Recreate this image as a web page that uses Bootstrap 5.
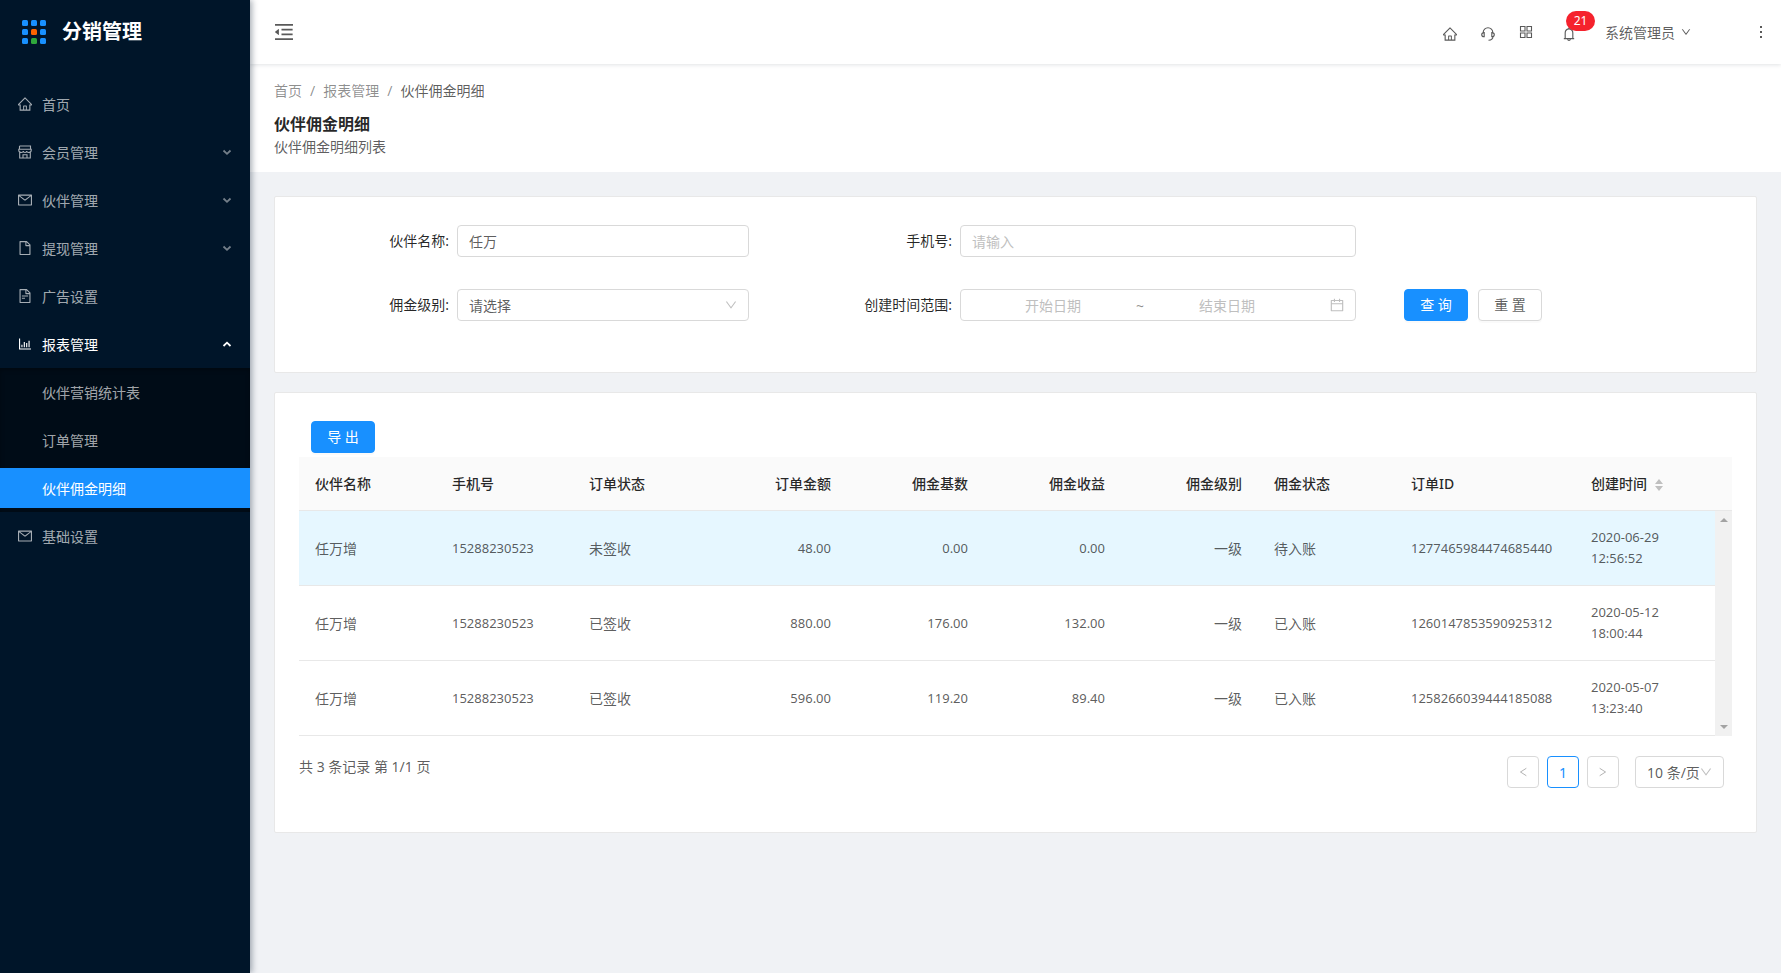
<!DOCTYPE html>
<html lang="zh-CN">
<head>
<meta charset="utf-8">
<meta name="viewport" content="width=device-width, initial-scale=1">
<title>伙伴佣金明细 - 分销管理</title>
<link rel="stylesheet" href="https://cdn.jsdelivr.net/npm/bootstrap@5.3.0/dist/css/bootstrap.min.css">
<style>
  :root { --brand: #1890ff; --line: #e8e8e8; --field: #d9d9d9; --ink: rgba(0,0,0,.85); --text: rgba(0,0,0,.65); --soft: rgba(0,0,0,.45); --hint: #bfbfbf; }
  body { font-family: "Noto Sans", "Noto Sans CJK SC", sans-serif; font-size: 14px; line-height: 21px; color: var(--text); background: #f0f2f5; }
  a { color: inherit; text-decoration: none; }
  button, input, select { font: inherit; color: inherit; }
  .ico { width: 14px; height: 14px; fill: currentColor; flex: none; display: block; }
  .ico-18 { width: 18px; height: 18px; }
  .ico-12 { width: 12px; height: 12px; }
  .ico-10 { width: 10px; height: 10px; }

  /* sidebar */
  .sider { width: 250px; flex: none; background: #001529; color: rgba(255,255,255,.65); box-shadow: 2px 0 6px rgba(0,21,41,.35); z-index: 3; }
  .brand-bar { height: 64px; padding-left: 22px; gap: 16px; }
  .brand-bar h1 { font-size: 20px; line-height: 28px; font-weight: 700; color: #fff; }
  .menu a, .menu button { display: flex; align-items: center; width: 100%; height: 40px; margin: 4px 0; padding: 0 18px; gap: 10px; background: none; border: 0; color: inherit; text-align: left; }
  .menu li { display: flow-root; }
  .menu .on { color: #fff; }
  .menu .ico-10 { opacity: .7; }
  .menu .on .ico-10 { opacity: 1; }
  .submenu { background: #000c17; box-shadow: inset 0 2px 4px rgba(0,0,0,.3); }
  .submenu a { padding-left: 42px; }
  .submenu a.active { background: var(--brand); color: #fff; }

  /* top bar */
  .topbar { height: 64px; background: #fff; box-shadow: 0 1px 4px rgba(0,21,41,.12); z-index: 2; padding-left: 25px; }
  .topbar button, .topbar .tool { background: none; border: 0; padding: 0; }
  .topbar .tool { width: 38px; height: 64px; display: flex; align-items: center; justify-content: center; }
  .topbar .tool-low { padding-top: 3px; }
  .tool-bell { margin-left: 5px; }
  .count { position: absolute; top: 11px; left: 16px; width: 29px; height: 20px; border-radius: 10px; background: #f5222d; color: #fff; font-size: 12px; line-height: 20px; text-align: center; }
  .user { margin-left: 17px; gap: 6px; }
  .topbar .more { width: 40px; margin-left: 50px; }

  .page-head { background: #fff; padding: 16px 24px 15px; }
  .crumbs { color: var(--soft); gap: 8px; }
  .crumbs .here { color: var(--text); }
  .page-head h2 { font-size: 16px; line-height: 24px; font-weight: 700; color: var(--ink); margin: 11px 0 0; }

  .panel { background: #fff; border: 1px solid var(--line); border-radius: 2px; }

  /* search form */
  .search { display: grid; grid-template-columns: 182fr 292fr 211fr 396fr 400fr; row-gap: 32px; padding: 28px 0 51px; margin-bottom: 19px; }
  .search label { color: var(--ink); text-align: right; line-height: 32px; padding-right: 8px; }
  .field { height: 32px; width: 100%; border: 1px solid var(--field); border-radius: 4px; background: #fff; padding: 0 11px; outline: 0; min-width: 0; }
  ::placeholder { color: var(--hint) !important; opacity: 1; }
  .pick { position: relative; }
  .pick select { appearance: none; }
  .pick svg { position: absolute; right: 12px; top: 10px; color: var(--hint); pointer-events: none; }
  .range input { border: 0; padding: 0; outline: 0; min-width: 0; flex: 1 1 0; text-align: center; background: none; }
  .range span { width: 12px; text-align: center; color: var(--soft); }
  .range svg { margin-left: 22px; color: var(--hint); }
  .actions { padding-left: 48px; gap: 10px; }
  .act { width: 64px; height: 32px; padding: 0; border: 1px solid var(--field); border-radius: 4px; line-height: 30px; color: var(--text); background: #fff; box-shadow: 0 2px 0 rgba(0,0,0,.02); }
  .act-main { background: var(--brand); border-color: var(--brand); color: #fff; }

  /* table */
  .list { padding: 28px 24px 44px; margin-bottom: 24px; }
  .tools { padding: 0 12px 4px; }
  .data { table-layout: fixed; width: 100%; border-collapse: separate; border-spacing: 0; }
  .data th, .data td { padding: 16px; border-bottom: 1px solid var(--line); vertical-align: middle; }
  .data th { background: #fafafa; color: var(--ink); font-weight: 500; }
  .data .hover td { background: #e6f7ff; }
  .num { font-size: 13px; }
  .col-std { width: 137px; }
  .col-id { width: 180px; }
  .rail { width: 17px; flex: none; }
  .rail-head { height: 54px; background: #fafafa; border-bottom: 1px solid var(--line); }
  .rail-track { background: #f1f1f1; color: #a3a3a3; padding: 7px 0; }
  .rail svg { width: 8px; height: 4px; fill: currentColor; }
  .sorter { width: 8px; height: 12px; fill: var(--hint); }

  .pager { padding: 20px 8px 0 0; }
  .page-btn { width: 32px; height: 32px; border: 1px solid var(--field); border-radius: 4px; background: #fff; padding: 0; display: flex; align-items: center; justify-content: center; }
  .page-btn:disabled { color: rgba(0,0,0,.3); }
  .page-btn.now { border-color: var(--brand); color: var(--brand); }
  .size { width: 89px; margin-left: 8px; }
  .size .field { padding-right: 0; }
</style>
</head>
<body>
<svg class="d-none" xmlns="http://www.w3.org/2000/svg">
  <symbol id="home" viewBox="64 64 896 896"><path d="M946.5 505L534.2 92.9a31.500 31.500 0 0 0-44.400 0L77.500 505a63.900 63.900 0 0 0-18.800 46c.4 35.200 29.700 63.300 64.900 63.300h42.500V940h691.800V614.300h43.400c17.100 0 33.200-6.700 45.300-18.800a63.600 63.600 0 0 0 18.700-45.300c0-17-6.700-33.100-18.800-45.200zM568 868H456V664h112v204zm217.900-325.700V868H632V640c0-22.100-17.900-40-40-40H432c-22.100 0-40 17.900-40 40v228H238.100V542.300h-96l370-369.700 23.100 23.100L882 542.300h-96.100z"/></symbol>
  <symbol id="shop" viewBox="0 0 14 14"><path fill="none" stroke="currentColor" stroke-width="1.1" d="M1.500 1h11v3.500M1.500 4.500V1M.8 4.200h12.400v1.300c0 1.400-1.600 2-2.700 2-1 0-1.800-.6-1.800-1.400 0 .8-.8 1.400-1.700 1.400s-1.700-.6-1.700-1.400c0 .8-.8 1.400-1.800 1.400-1.100 0-2.700-.6-2.700-2zM1.700 7.500V13h10.600V7.500M5 13V9.800h4V13"/></symbol>
  <symbol id="mail" viewBox="64 64 896 896"><path d="M928 160H96c-17.700 0-32 14.300-32 32v640c0 17.700 14.300 32 32 32h832c17.700 0 32-14.300 32-32V192c0-17.700-14.300-32-32-32zm-40 110.800V792H136V270.800l-27.600-21.500 39.300-50.500 42.800 33.300h643.100l42.800-33.300 39.300 50.500-27.700 21.500zM833.600 232L512 482 190.400 232l-42.800-33.300-39.300 50.500 27.600 21.500 341.600 265.600a56 56 0 0 0 68.700 0L888 270.800l27.600-21.500-39.300-50.500-42.700 33.200z"/></symbol>
  <symbol id="file" viewBox="64 64 896 896"><path d="M854.600 288.600L639.400 73.400c-6-6-14.100-9.400-22.600-9.400H192c-17.700 0-32 14.300-32 32v832c0 17.700 14.300 32 32 32h640c17.700 0 32-14.300 32-32V311.300c0-8.500-3.400-16.700-9.400-22.700zM790.200 326H602V137.800L790.200 326zm1.800 562H232V136h302v216a42 42 0 0 0 42 42h216v494z"/></symbol>
  <symbol id="file-text" viewBox="64 64 896 896"><path d="M854.600 288.600L639.400 73.400c-6-6-14.100-9.400-22.600-9.400H192c-17.700 0-32 14.300-32 32v832c0 17.700 14.300 32 32 32h640c17.700 0 32-14.300 32-32V311.300c0-8.500-3.400-16.700-9.400-22.700zM790.200 326H602V137.800L790.200 326zm1.800 562H232V136h302v216a42 42 0 0 0 42 42h216v494zM504 618H320c-4.400 0-8 3.600-8 8v48c0 4.400 3.600 8 8 8h184c4.400 0 8-3.600 8-8v-48c0-4.400-3.600-8-8-8zM312 490v48c0 4.400 3.600 8 8 8h384c4.400 0 8-3.600 8-8v-48c0-4.400-3.600-8-8-8H320c-4.400 0-8 3.600-8 8z"/></symbol>
  <symbol id="chart" viewBox="64 64 896 896"><path d="M888 792H200V168c0-4.400-3.600-8-8-8h-56c-4.400 0-8 3.600-8 8v688c0 4.400 3.600 8 8 8h752c4.400 0 8-3.600 8-8v-56c0-4.400-3.600-8-8-8zM280 552h72v160h-72zM432 376h72v336h-72zM584 454h72v258h-72zM736 296h72v416h-72z"/></symbol>
  <symbol id="down" viewBox="64 64 896 896"><path d="M884 256h-75c-5.100 0-9.900 2.500-12.900 6.600L512 654.200 227.900 262.600c-3-4.100-7.800-6.600-12.900-6.600h-75c-6.500 0-10.300 7.400-6.500 12.700l352.600 486.100c12.800 17.600 39 17.600 51.700 0l352.600-486.100c3.900-5.300.1-12.700-6.400-12.700z"/></symbol>
  <symbol id="caret-down" viewBox="0 0 10 10"><path fill="none" stroke="currentColor" stroke-width="1.800" d="M1.500 3.500 5 6.800 8.500 3.500"/></symbol>
  <symbol id="caret-up" viewBox="0 0 10 10"><path fill="none" stroke="currentColor" stroke-width="1.800" d="M1.500 7 5 3.700 8.500 7"/></symbol>
  <symbol id="fold" viewBox="112 112 800 800"><path d="M408 442h480c4.400 0 8-3.600 8-8v-56c0-4.400-3.600-8-8-8H408c-4.400 0-8 3.600-8 8v56c0 4.400 3.600 8 8 8zm-8 204c0 4.400 3.600 8 8 8h480c4.400 0 8-3.600 8-8v-56c0-4.400-3.600-8-8-8H408c-4.400 0-8 3.600-8 8v56zm504-486H120c-4.400 0-8 3.600-8 8v56c0 4.400 3.600 8 8 8h784c4.400 0 8-3.600 8-8v-56c0-4.400-3.600-8-8-8zm0 632H120c-4.400 0-8 3.600-8 8v56c0 4.400 3.600 8 8 8h784c4.400 0 8-3.600 8-8v-56c0-4.400-3.600-8-8-8zM115.400 518.900L271.700 642c5.800 4.600 14.400.5 14.400-6.900V388.900c0-7.400-8.500-11.500-14.400-6.900L115.400 505.100a8.740 8.740 0 0 0 0 13.800z"/></symbol>
  <symbol id="headset" viewBox="0 0 14 14"><path fill="none" stroke="currentColor" stroke-width="1.100" d="M2.200 6V5.600a4.800 4.800 0 0 1 9.600 0V6M3.200 5.600v4.100c-1.600 0-2.500-.9-2.500-2s.9-2.100 2.500-2.100zM10.800 5.600v4.100c1.600 0 2.500-.9 2.500-2s-.9-2.100-2.500-2.100zM12 9.500c0 2.300-1.500 3.600-4.500 3.700"/></symbol>
  <symbol id="grid" viewBox="0 0 14 14"><path fill="none" stroke="currentColor" stroke-width="1.100" d="M1.500 1.500H6V6H1.500zM8 1.500h4.500V6H8zM1.500 8H6v4.500H1.500zM8 8h4.500v4.500H8z"/></symbol>
  <symbol id="bell" viewBox="64 64 896 896"><path d="M816 768h-24V428c0-141.100-104.300-257.800-240-277.200V112c0-22.100-17.900-40-40-40s-40 17.900-40 40v38.800C336.300 170.200 232 286.900 232 428v340h-24c-17.700 0-32 14.300-32 32v32c0 4.400 3.600 8 8 8h216c0 61.800 50.200 112 112 112s112-50.200 112-112h216c4.400 0 8-3.600 8-8v-32c0-17.700-14.300-32-32-32zM512 888c-26.500 0-48-21.500-48-48h96c0 26.500-21.500 48-48 48zM304 768V428c0-55.600 21.600-107.800 60.900-147.100S456.400 220 512 220c55.600 0 107.800 21.600 147.100 60.900S720 372.400 720 428v340H304z"/></symbol>
  <symbol id="more" viewBox="0 0 14 14"><path d="M6 1h2v2H6zM6 6h2v2H6zM6 11h2v2H6z"/></symbol>
  <symbol id="calendar" viewBox="64 64 896 896"><path d="M880 184H712v-64c0-4.400-3.600-8-8-8h-56c-4.400 0-8 3.600-8 8v64H384v-64c0-4.400-3.600-8-8-8h-56c-4.400 0-8 3.600-8 8v64H144c-17.700 0-32 14.300-32 32v664c0 17.700 14.300 32 32 32h736c17.700 0 32-14.300 32-32V216c0-17.700-14.300-32-32-32zm-40 656H184V460h656v380zM184 392V256h128v48c0 4.400 3.600 8 8 8h56c4.400 0 8-3.600 8-8v-48h256v48c0 4.400 3.600 8 8 8h56c4.400 0 8-3.600 8-8v-48h128v136H184z"/></symbol>
  <symbol id="left" viewBox="0 0 12 12"><path fill="none" stroke="currentColor" stroke-width="1.200" d="M10 1.500 3 6 10 10.500"/></symbol>
  <symbol id="right" viewBox="0 0 12 12"><path fill="none" stroke="currentColor" stroke-width="1.200" d="M2 1.500 9 6 2 10.500"/></symbol>
</svg>

<div class="d-flex min-vh-100">
  <aside class="sider position-relative">
    <a class="brand-bar d-flex align-items-center" href="#">
      <svg width="24" height="24" viewBox="0 0 24 24" fill="#1890ff" aria-hidden="true">
        <rect width="6" height="6" rx="1.500"/><rect x="9" width="6" height="6" rx="1.500"/><rect x="18" width="6" height="6" rx="1.500"/>
        <rect y="9" width="6" height="6" rx="1.500"/><rect x="9" y="9" width="6" height="6" rx="1.500" fill="#fa6400"/><rect x="18" y="9" width="6" height="6" rx="1.500"/>
        <rect y="18" width="6" height="6" rx="1.500"/><rect x="9" y="18" width="6" height="6" rx="1.500" fill="#2fa83c"/><rect x="18" y="18" width="6" height="6" rx="1.500"/>
      </svg>
      <h1 class="mb-0">分销管理</h1>
    </a>
    <ul class="menu list-unstyled pt-3 mb-0">
      <li><a href="#"><svg class="ico"><use href="#home"/></svg>首页</a></li>
      <li><button type="button"><svg class="ico"><use href="#shop"/></svg>会员管理<svg class="ico ico-10 ms-auto"><use href="#caret-down"/></svg></button></li>
      <li><button type="button"><svg class="ico"><use href="#mail"/></svg>伙伴管理<svg class="ico ico-10 ms-auto"><use href="#caret-down"/></svg></button></li>
      <li><button type="button"><svg class="ico"><use href="#file"/></svg>提现管理<svg class="ico ico-10 ms-auto"><use href="#caret-down"/></svg></button></li>
      <li><a href="#"><svg class="ico"><use href="#file-text"/></svg>广告设置</a></li>
      <li>
        <button class="on" type="button" aria-expanded="true"><svg class="ico"><use href="#chart"/></svg>报表管理<svg class="ico ico-10 ms-auto"><use href="#caret-up"/></svg></button>
        <ul class="submenu list-unstyled">
          <li><a href="#">伙伴营销统计表</a></li>
          <li><a href="#">订单管理</a></li>
          <li><a class="active" href="#" aria-current="page">伙伴佣金明细</a></li>
        </ul>
      </li>
      <li><a href="#"><svg class="ico"><use href="#mail"/></svg>基础设置</a></li>
    </ul>
  </aside>

  <div class="flex-grow-1 d-flex flex-column">
    <header class="topbar position-relative d-flex align-items-center">
      <button type="button" aria-label="收起菜单"><svg class="ico ico-18"><use href="#fold"/></svg></button>
      <a class="tool tool-low ms-auto" href="#" aria-label="首页"><svg class="ico"><use href="#home"/></svg></a>
      <a class="tool tool-low" href="#" aria-label="客服"><svg class="ico"><use href="#headset"/></svg></a>
      <a class="tool" href="#" aria-label="应用"><svg class="ico"><use href="#grid"/></svg></a>
      <button class="tool tool-low tool-bell position-relative" type="button" aria-label="通知"><svg class="ico"><use href="#bell"/></svg><span class="count">21</span></button>
      <button class="user d-flex align-items-center" type="button">系统管理员<svg class="ico ico-10"><use href="#down"/></svg></button>
      <button class="tool more" type="button" aria-label="更多"><svg class="ico"><use href="#more"/></svg></button>
    </header>

    <section class="page-head">
      <nav class="crumbs d-flex" aria-label="面包屑">
        <a href="#">首页</a><span>/</span><a href="#">报表管理</a><span>/</span><a class="here" href="#" aria-current="page">伙伴佣金明细</a>
      </nav>
      <h2>伙伴佣金明细</h2>
      <p class="mb-0">伙伴佣金明细列表</p>
    </section>

    <main class="px-4 pt-4">
      <form class="panel search">
        <label for="name">伙伴名称:</label>
        <input class="field" id="name" type="text" value="任万">
        <label for="phone">手机号:</label>
        <input class="field" id="phone" type="text" placeholder="请输入">
        <span></span>
        <label for="level">佣金级别:</label>
        <div class="pick"><select class="field" id="level"><option>请选择</option></select><svg class="ico ico-12"><use href="#down"/></svg></div>
        <label for="from">创建时间范围:</label>
        <div class="field range d-flex align-items-center">
          <input id="from" type="text" placeholder="开始日期"><span>~</span><input type="text" placeholder="结束日期" aria-label="结束日期"><svg class="ico"><use href="#calendar"/></svg>
        </div>
        <div class="actions d-flex">
          <button class="act act-main" type="submit">查 询</button>
          <button class="act" type="reset">重 置</button>
        </div>
      </form>

      <section class="panel list">
        <div class="tools d-flex">
          <button class="act act-main" type="button">导 出</button>
        </div>
        <div class="d-flex">
          <table class="data">
            <colgroup><col class="col-std" span="8"><col class="col-id"><col></colgroup>
            <thead>
              <tr><th>伙伴名称</th><th>手机号</th><th>订单状态</th><th class="text-end">订单金额</th><th class="text-end">佣金基数</th><th class="text-end">佣金收益</th><th class="text-end">佣金级别</th><th>佣金状态</th><th>订单ID</th>
                <th class="text-nowrap">创建时间<svg class="sorter ms-2" viewBox="0 0 8 12"><path d="M4 0l4 5H0zM4 12L0 7h8z"/></svg></th></tr>
            </thead>
            <tbody>
              <tr class="hover"><td>任万增</td><td class="num">15288230523</td><td>未签收</td><td class="num text-end">48.00</td><td class="num text-end">0.00</td><td class="num text-end">0.00</td><td class="text-end">一级</td><td>待入账</td><td class="num">1277465984474685440</td><td class="num">2020-06-29<br>12:56:52</td></tr>
              <tr><td>任万增</td><td class="num">15288230523</td><td>已签收</td><td class="num text-end">880.00</td><td class="num text-end">176.00</td><td class="num text-end">132.00</td><td class="text-end">一级</td><td>已入账</td><td class="num">1260147853590925312</td><td class="num">2020-05-12<br>18:00:44</td></tr>
              <tr><td>任万增</td><td class="num">15288230523</td><td>已签收</td><td class="num text-end">596.00</td><td class="num text-end">119.20</td><td class="num text-end">89.40</td><td class="text-end">一级</td><td>已入账</td><td class="num">1258266039444185088</td><td class="num">2020-05-07<br>13:23:40</td></tr>
            </tbody>
          </table>
          <div class="rail d-flex flex-column" aria-hidden="true">
            <div class="rail-head"></div>
            <div class="rail-track flex-grow-1 d-flex flex-column align-items-center justify-content-between">
              <svg viewBox="0 0 8 4"><path d="M4 0l4 4H0z"/></svg>
              <svg viewBox="0 0 8 4"><path d="M4 4L0 0h8z"/></svg>
            </div>
          </div>
        </div>
        <div class="pager d-flex gap-2">
          <span class="me-auto">共 3 条记录 第 1/1 页</span>
          <button class="page-btn" type="button" disabled aria-label="上一页"><svg class="ico ico-10"><use href="#left"/></svg></button>
          <button class="page-btn now" type="button" aria-current="page">1</button>
          <button class="page-btn" type="button" disabled aria-label="下一页"><svg class="ico ico-10"><use href="#right"/></svg></button>
          <div class="pick size"><select class="field" aria-label="每页条数"><option>10 条/页</option></select><svg class="ico ico-12"><use href="#down"/></svg></div>
        </div>
      </section>
    </main>
  </div>
</div>
<script src="https://cdn.jsdelivr.net/npm/bootstrap@5.3.0/dist/js/bootstrap.bundle.min.js"></script>
</body>
</html>
